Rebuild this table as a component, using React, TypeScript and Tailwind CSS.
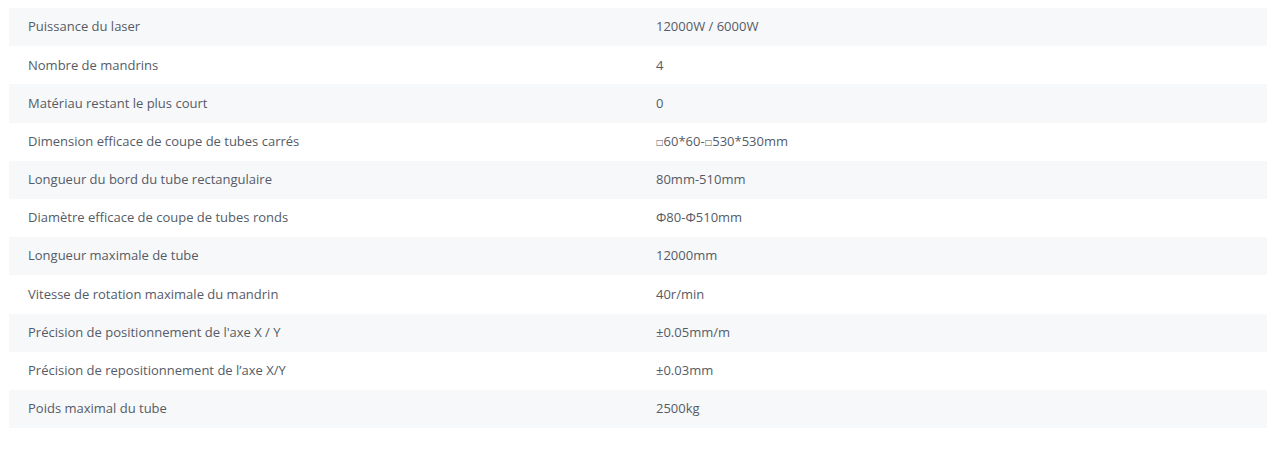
const specs: [string, string][] = [
  ["Puissance du laser", "12000W / 6000W"],
  ["Nombre de mandrins", "4"],
  ["Matériau restant le plus court", "0"],
  ["Dimension efficace de coupe de tubes carrés", "□60*60-□530*530mm"],
  ["Longueur du bord du tube rectangulaire", "80mm-510mm"],
  ["Diamètre efficace de coupe de tubes ronds", "Φ80-Φ510mm"],
  ["Longueur maximale de tube", "12000mm"],
  ["Vitesse de rotation maximale du mandrin", "40r/min"],
  ["Précision de positionnement de l'axe X / Y", "±0.05mm/m"],
  ["Précision de repositionnement de l’axe X/Y", "±0.03mm"],
  ["Poids maximal du tube", "2500kg"],
];

// the small square glyph is rendered smaller than the surrounding digits
function Value({ text }: { text: string }) {
  const parts = text.split("□");
  return (
    <>
      {parts.map((p, i) => (
        <span key={i}>
          {i > 0 && <span className="text-[8px] align-[1px] font-['DejaVu_Sans',sans-serif]">□</span>}
          {p}
        </span>
      ))}
    </>
  );
}

export default function App() {
  return (
    <div className="bg-white w-full h-[449px] pt-2 px-[9px] font-['Open_Sans',sans-serif]">
      <table className="w-[1258px] border-collapse table-fixed">
        <tbody>
          {specs.map(([label, value], i) => (
            <tr key={label} className={i % 2 === 0 ? "bg-[#f7f8fa]" : "bg-white"}>
              <td className="h-[38.2px] pl-[19px] text-[13px] text-[#555b66] align-middle">{label}</td>
              <td className="h-[38.2px] pl-[18px] text-[13px] text-[#555b66] align-middle">
                <Value text={value} />
              </td>
            </tr>
          ))}
        </tbody>
      </table>
    </div>
  );
}
